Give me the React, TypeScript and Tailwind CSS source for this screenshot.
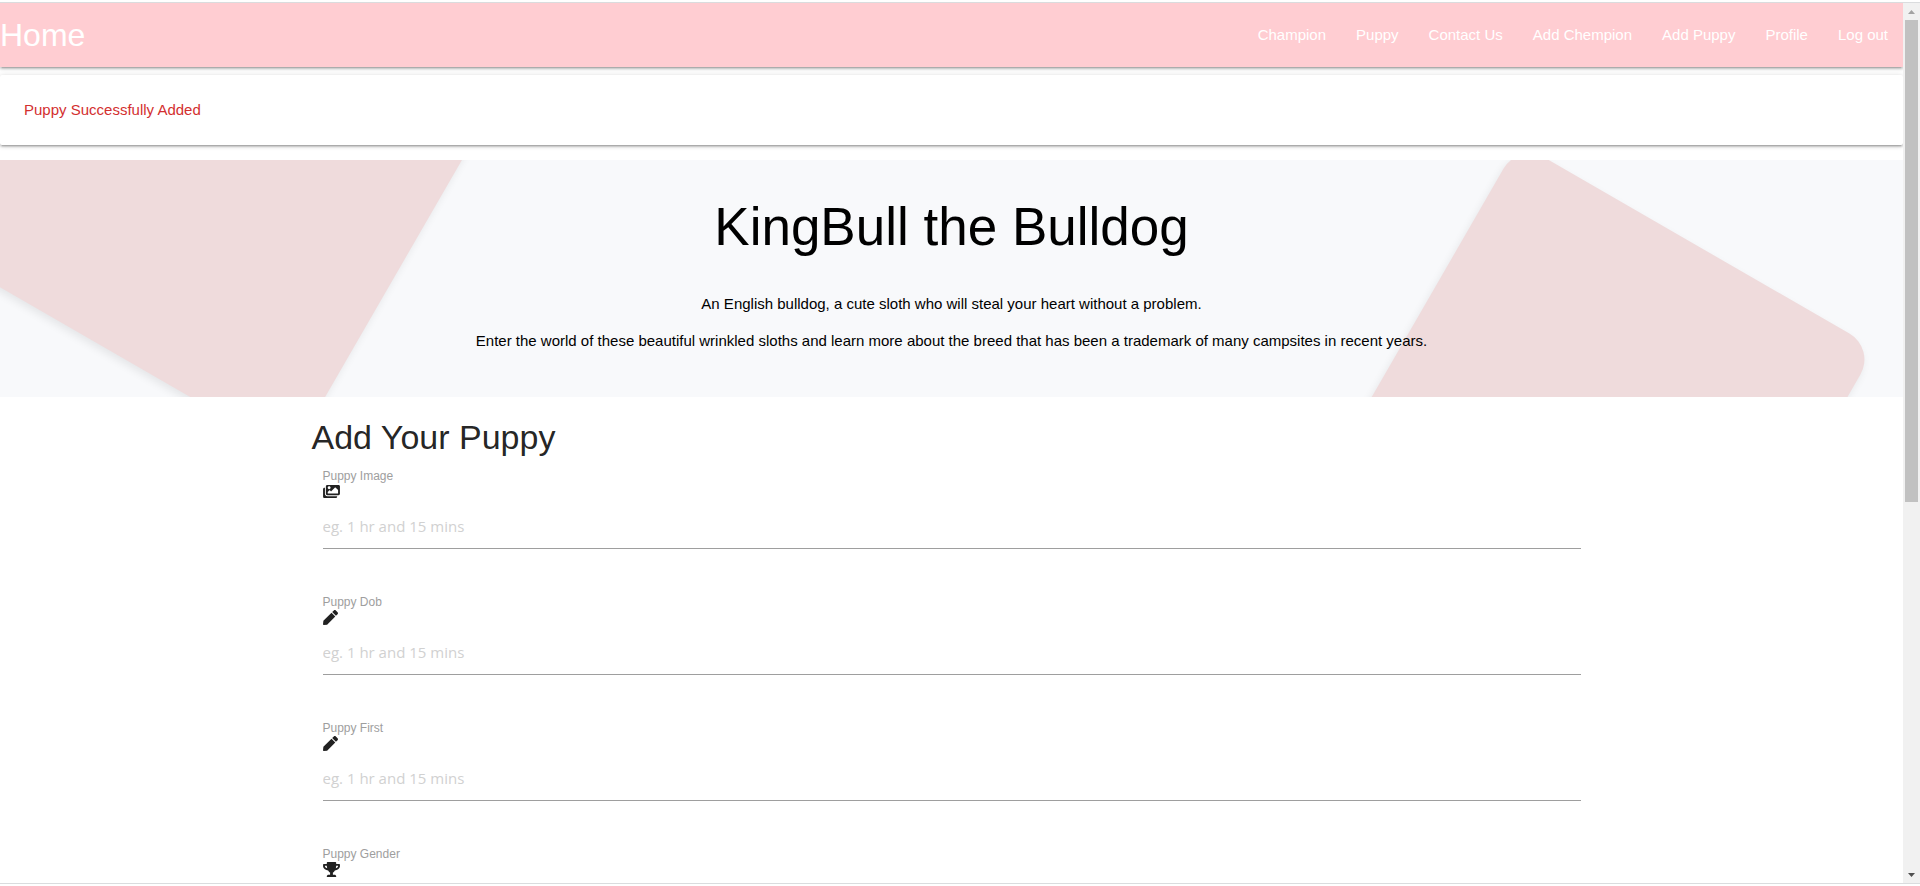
import { useId } from "react";
import type { IconType } from "react-icons";
import { FaImages, FaPen, FaTrophy } from "react-icons/fa";

const navLinks = ["Champion", "Puppy", "Contact Us", "Add Chempion", "Add Puppy", "Profile", "Log out"];

const raised =
  "shadow-[0_2px_2px_0_rgba(0,0,0,0.14),0_3px_1px_-2px_rgba(0,0,0,0.12),0_1px_5px_0_rgba(0,0,0,0.2)]";

type FieldProps = {
  label: string;
  icon: IconType;
  iconClass: string;
};

function Field({ label, icon: Icon, iconClass }: FieldProps) {
  const id = useId();
  return (
    <div className="mb-[45px] flex h-[81px] flex-col px-[11px]">
      <label htmlFor={id} className="text-xs leading-4 text-[#9e9e9e]">
        {label}
      </label>
      <Icon className={iconClass} aria-hidden="true" />
      <input
        id={id}
        type="text"
        placeholder="eg. 1 hr and 15 mins"
        className="mt-auto h-[45px] w-full shrink-0 border-b border-[#9e9e9e] bg-transparent font-['Open_Sans','Noto_Sans',sans-serif] text-[15px] outline-none placeholder:text-[#d1d1d1]"
      />
    </div>
  );
}

function ScrollBar() {
  return (
    <div className="flex w-[17px] shrink-0 flex-col items-center bg-[#f1f1f1]" aria-hidden="true">
      <svg viewBox="0 0 17 17" className="h-[17px] w-[17px] shrink-0" fill="#a3a3a3">
        <path d="M5 11h7L8.500 7z" />
      </svg>
      <div className="w-[13px] grow-[482] bg-[#c1c1c1]" />
      <div className="grow-[364]" />
      <svg viewBox="0 0 17 17" className="h-[17px] w-[17px] shrink-0" fill="#505050">
        <path d="M5 7h7L8.500 11z" />
      </svg>
    </div>
  );
}

export default function App() {
  return (
    <div className="flex h-screen flex-col bg-white pt-0.5 pb-0.5 font-['Liberation_Sans',Arial,sans-serif] text-[15px] text-black/87">
      <div className="flex min-h-0 grow border-y border-[#dadcde]">
        <div className="min-w-0 grow overflow-hidden">
          <nav className={`flex h-16 items-center justify-between bg-[#ffcdd2] text-white ${raised}`}>
            <a href="#home" className="text-[32px]">
              Home
            </a>
            <ul className="flex">
              {navLinks.map((name) => (
                <li key={name}>
                  <a href="#page" className="px-[15px]">
                    {name}
                  </a>
                </li>
              ))}
            </ul>
          </nav>

          <div className={`mt-2 mb-[15px] rounded-xs bg-white p-6 leading-[22px] text-[#d32f2f] ${raised}`}>
            <p>Puppy Successfully Added</p>
          </div>

          <header className="relative overflow-hidden bg-[#f8f9fb] pt-[37px] pb-[45px] text-center text-black">
            <div className="absolute top-[-192px] left-[10px] size-[412px] rotate-30 rounded-[30px] bg-[#efdbdc] shadow-[0_4px_8px_rgba(0,0,0,0.08)]" />
            <div className="absolute top-[58px] right-[103px] size-[412px] rotate-30 rounded-[30px] bg-[#efdbdc] shadow-[0_4px_8px_rgba(0,0,0,0.08)]" />
            <div className="relative">
              <h1 className="text-[53px] leading-[60px]">KingBull the Bulldog</h1>
              <p className="mt-9 leading-[22px]">
                An English bulldog, a cute sloth who will steal your heart without a problem.
              </p>
              <p className="mt-[15px] leading-[22px]">
                Enter the world of these beautiful wrinkled sloths and learn more about the breed that has been a
                trademark of many campsites in recent years.
              </p>
            </div>
          </header>

          <main className="mx-auto max-w-[1280px] pt-[21px]">
            <h2 className="mb-3 text-[34px] leading-[38px]">Add Your Puppy</h2>
            <form>
              <Field label="Puppy Image" icon={FaImages} iconClass="h-[15px] w-[17px]" />
              <Field label="Puppy Dob" icon={FaPen} iconClass="size-[15px]" />
              <Field label="Puppy First" icon={FaPen} iconClass="size-[15px]" />
              <Field label="Puppy Gender" icon={FaTrophy} iconClass="h-[15px] w-[17px]" />
            </form>
          </main>
        </div>
        <ScrollBar />
      </div>
    </div>
  );
}
